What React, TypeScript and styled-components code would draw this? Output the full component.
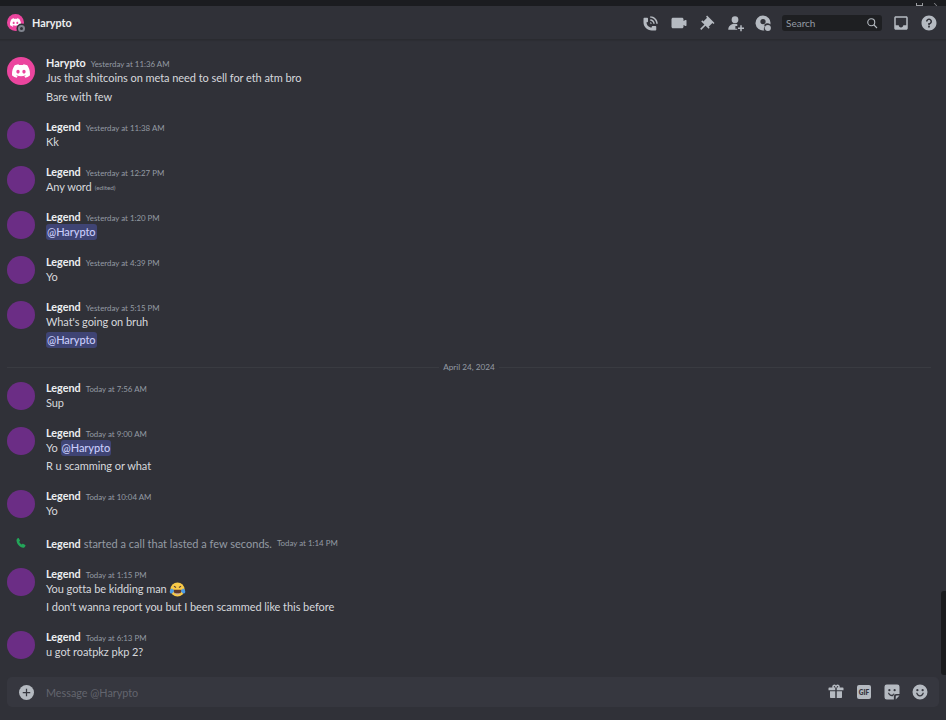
import React from "react";
import styled, { createGlobalStyle } from "styled-components";
import { SiDiscord } from "react-icons/si";

const Global = createGlobalStyle`
  html, body { margin: 0; padding: 0; background: #303138; }
  * { box-sizing: border-box; }
`;

const Page = styled.div`
  position: relative;
  width: 946px;
  height: 720px;
  overflow: hidden;
  display: flex;
  flex-direction: column;
  background: #303138;
  font-family: "Lato", "Noto Sans", sans-serif;
  color: #d6d8dc;
`;
const TitleBar = styled.div`
  height: 6px;
  flex: none;
  background: #1b1c20;
  display: flex;
  justify-content: flex-end;
  align-items: flex-end;
  gap: 12px;
  padding-right: 4px;
`;
const WinGlyph = styled.span<{ $x?: boolean }>`
  width: 7px;
  height: 3px;
  border: 1px solid #9a9ca0;
  border-top: none;
  ${(p) => p.$x && "border: none; border-left: 1px solid #8a8c90; transform: skewX(40deg);"}
`;
const Header = styled.header`
  height: 34px;
  flex: none;
  display: flex;
  align-items: center;
  padding: 0 8px 0 7px;
  border-bottom: 1px solid #2a2b30;
  box-shadow: 0 1px 1px rgba(0, 0, 0, 0.08);
`;
const HeaderAvatar = styled.div`
  position: relative;
  width: 17px;
  height: 17px;
  border-radius: 50%;
  background: #eb459e;
  color: #fff;
  display: flex;
  align-items: center;
  justify-content: center;
  font-size: 11px;
  margin-right: 8px;
`;
const Status = styled.span`
  position: absolute;
  right: -1px;
  bottom: -1px;
  width: 7px;
  height: 7px;
  border-radius: 50%;
  background: #303138;
  border: 2px solid #80848e;
  box-shadow: 0 0 0 1.5px #303138;
`;
const Title = styled.h1`
  margin: 0;
  font-size: 10.8px;
  font-weight: 700;
  color: #eceef0;
  flex: 1;
`;
const Tools = styled.div`
  display: flex;
  align-items: center;
  color: #b5bac1;
`;
const ToolIcon = styled.svg`
  width: 18px;
  height: 18px;
  fill: currentColor;
  margin-right: 10px;
  display: block;
  &:last-child { margin-right: 0; }
`;
const SearchBox = styled.div`
  width: 100px;
  height: 16px;
  margin: 0 10px 0 0;
  border-radius: 3px;
  background: #1e1f22;
  display: flex;
  align-items: center;
  justify-content: space-between;
  padding: 0 4px;
  font-size: 10px;
  color: #949ba4;
`;
const SearchGlass = styled.svg`
  width: 12px;
  height: 12px;
  fill: none;
  stroke: #b5bac1;
  stroke-width: 2.2;
`;
const Feed = styled.main`
  flex: 1;
  padding-top: 14px;
  min-height: 0;
`;
const Group = styled.article`
  display: flex;
  padding-left: 7px;
  margin-bottom: 12px;
`;
const Avatar = styled.div<{ $bg: string }>`
  width: 28px;
  height: 28px;
  flex: none;
  margin-top: 3px;
  border-radius: 50%;
  background: ${(p) => p.$bg};
  color: #fff;
  display: flex;
  align-items: center;
  justify-content: center;
  font-size: 18px;
  margin-right: 11px;
`;
const Body = styled.div`
  min-width: 0;
`;
const Meta = styled.div`
  height: 15px;
  line-height: 14px;
  white-space: nowrap;
`;
const Name = styled.span`
  font-size: 10.8px;
  font-weight: 700;
  color: #eceef0;
`;
const Stamp = styled.time`
  font-size: 7.9px;
  color: #949ba4;
  margin-left: 5px;
`;
const Line = styled.div<{ $gap?: number }>`
  height: 18px;
  line-height: 16px;
  font-size: 11px;
  letter-spacing: -0.06px;
  color: #d6d8dc;
  white-space: nowrap;
  margin-top: ${(p) => p.$gap ?? 0}px;
  display: flex;
  align-items: center;
`;
const Mention = styled.span`
  background: #3f4474;
  color: #c9cdfb;
  border-radius: 3px;
  padding: 0 1px;
  font-weight: 500;
`;
const Edited = styled.span`
  font-size: 6.5px;
  color: #949ba4;
  margin-left: 3px;
  padding-top: 2px;
`;
const JoyIcon = styled.svg`
  width: 17px;
  height: 17px;
  margin-left: 2px;
  flex: none;
`;
const Divider = styled.div`
  display: flex;
  align-items: center;
  height: 12px;
  margin: 8px 15px 6px 7px;
  font-size: 8.2px;
  color: #949ba4;
  &::before,
  &::after {
    content: "";
    height: 1px;
    flex: 1;
    background: #393b41;
  }
`;
const DividerLabel = styled.span`
  padding: 0 4px;
  white-space: nowrap;
`;
const CallRow = styled.div`
  display: flex;
  align-items: center;
  height: 16px;
  margin: 15px 0 14px;
  padding-left: 15px;
  white-space: nowrap;
`;
const CallIcon = styled.svg`
  width: 12px;
  height: 12px;
  fill: #23a559;
  margin-right: 19px;
  flex: none;
`;
const CallText = styled.span`
  font-size: 11px;
  color: #949ba4;
  margin-left: 3px;
`;
const Composer = styled.footer`
  flex: none;
  height: 30px;
  margin: 0 7px 13px;
  padding: 0 10px 0 12px;
  border-radius: 5px;
  background: #36373f;
  display: flex;
  align-items: center;
  color: #b5bac1;
`;
const AddIcon = styled.svg`
  width: 15px;
  height: 15px;
  margin-right: 12px;
  flex: none;
`;
const Placeholder = styled.span`
  flex: 1;
  font-size: 10.8px;
  color: #63656e;
`;
const ComposerIcon = styled.svg`
  width: 18px;
  height: 18px;
  fill: currentColor;
  margin-left: 10px;
  flex: none;
`;
const GifBadge = styled.span`
  width: 14px;
  height: 14px;
  margin: 0 2px 0 12px;
  border-radius: 2px;
  background: #b5bac1;
  color: #36373f;
  font-size: 6.5px;
  font-weight: 800;
  display: flex;
  align-items: center;
  justify-content: center;
  flex: none;
`;
const Scrollbar = styled.div`
  position: absolute;
  right: 0;
  top: 591px;
  width: 5px;
  height: 84px;
  background: #1a1b1e;
  border-radius: 3px 0 0 3px;
`;

const phone = "M11 5V3C16.515 3 21 7.486 21 13H19C19 8.589 15.411 5 11 5ZM17 13H15C15 10.795 13.206 9 11 9V7C14.309 7 17 9.691 17 13ZM11 11V13H13C13 11.896 12.105 11 11 11ZM14 16H18C18.553 16 19 16.447 19 17V21C19 21.553 18.553 22 18 22H13C6.925 22 2 17.075 2 11V6C2 5.447 2.448 5 3 5H7C7.553 5 8 5.447 8 6V10C8 10.553 7.553 11 7 11H6C6.063 14.938 9 18 13 18V17C13 16.447 13.447 16 14 16Z";
const video = "M21.526 8.149C21.231 7.966 20.862 7.951 20.553 8.105L18 9.382V7C18 5.897 17.103 5 16 5H4C2.897 5 2 5.897 2 7V17C2 18.104 2.897 19 4 19H16C17.103 19 18 18.104 18 17V14.618L20.553 15.894C20.694 15.965 20.847 16 21 16C21.183 16 21.365 15.949 21.526 15.851C21.82 15.668 22 15.347 22 15V9C22 8.653 21.82 8.332 21.526 8.149Z";
const pin = "M22 12L12.101 2.10101L10.686 3.51401L12.101 4.92901L7.15096 9.87801V9.88001L5.73596 8.46501L4.32196 9.88001L8.56496 14.122L2.90796 19.778L4.32196 21.192L9.97896 15.536L14.222 19.778L15.636 18.364L14.222 16.95L19.171 12H19.172L20.586 13.414L22 12Z";
const addFriend = "M12 3a4.5 4.5 0 1 1 0 9 4.5 4.5 0 0 1 0-9ZM3 21c0-4.6 3.6-8 8.5-8 1.3 0 2.5.2 3.6.7V16h-2.6v3.6H15V21H3ZM19 15h2v3h3v2h-3v3h-2v-3h-3v-2h3v-3Z";
const inbox = "M19 3H4.99C3.88 3 3.01 3.89 3.01 5L3 19C3 20.1 3.88 21 4.99 21H19C20.1 21 21 20.1 21 19V5C21 3.89 20.1 3 19 3ZM19 15H15C15 16.66 13.65 18 12 18C10.35 18 9 16.66 9 15H4.99V5H19V15Z";
const help = "M12 2C6.486 2 2 6.487 2 12C2 17.515 6.486 22 12 22C17.514 22 22 17.515 22 12C22 6.487 17.514 2 12 2ZM12 18.25C11.31 18.25 10.75 17.691 10.75 17C10.75 16.31 11.31 15.75 12 15.75C12.69 15.75 13.25 16.31 13.25 17C13.25 17.691 12.69 18.25 12 18.25ZM13 13.875V15H11V12H12C13.104 12 14 11.103 14 10C14 8.896 13.104 8 12 8C10.896 8 10 8.896 10 10H8C8 7.795 9.795 6 12 6C14.205 6 16 7.795 16 10C16 11.861 14.723 13.429 13 13.875Z";
const gift = "M4 11h7v9H5a1 1 0 0 1-1-1v-8ZM13 11h7v8a1 1 0 0 1-1 1h-6v-9ZM3 6h4.2A3 3 0 0 1 7 5c0-1.7 1.3-3 2.8-3 1 0 1.7.5 2.2 1.3C12.500 2.500 13.200 2 14.200 2 15.700 2 17 3.300 17 5c0 .4-.1.7-.2 1H21a1 1 0 0 1 1 1v2.500H13V6h-2v3.500H2V7a1 1 0 0 1 1-1ZM9.800 4C9.300 4 9 4.400 9 5s.4 1 1 1h1V5.200C11 4.500 10.500 4 9.800 4ZM14.200 4c-.7 0-1.200.5-1.200 1.200V6h1c.6 0 1-.4 1-1s-.3-1-.8-1Z";
const sticker = "M5 2h14a3 3 0 0 1 3 3v9.500h-4.500a3 3 0 0 0-3 3V22H5a3 3 0 0 1-3-3V5a3 3 0 0 1 3-3Zm3.500 6a1.500 1.500 0 1 0 0 3 1.500 1.500 0 0 0 0-3Zm7 0a1.500 1.500 0 1 0 0 3 1.500 1.500 0 0 0 0-3ZM6.500 13c.8 3 3 4.500 5.500 4.500.6 0 1.200-.1 1.700-.3.2-1 .8-1.900 1.600-2.500l-.9-1.200c-.8 1.300-1.800 2-3 2-1.400 0-2.500-.8-3.300-2.500H6.500ZM17 22l5-5.500h-3.500a1.500 1.500 0 0 0-1.500 1.500v4Z";
const smile = "M12 2a10 10 0 1 1 0 20 10 10 0 0 1 0-20ZM8.500 8a1.500 1.500 0 1 0 0 3 1.500 1.500 0 0 0 0-3Zm7 0a1.500 1.500 0 1 0 0 3 1.500 1.500 0 0 0 0-3ZM6.700 13c.7 3 2.800 5 5.300 5s4.600-2 5.300-5h-1.800c-.6 2.100-1.900 3.300-3.500 3.300S9.100 15.100 8.500 13H6.700Z";
const callGlyph = "M7.500 2.500 10 7c.2.400.1.800-.2 1.100L8.300 9.500c.9 2.200 2.800 4.300 5.200 5.500l1.500-1.400c.3-.3.700-.3 1.100-.1l4.400 2.700c.4.200.6.700.4 1.100-.7 1.900-2.500 4.200-4.500 4.200C10 21.500 3 13.500 3 6.500c0-1.700 2.200-3.700 3.500-4.300.4-.2.800-.1 1 .3Z";

const purple = "#6b2d85";
type Msg = { name: string; time: string; lines: React.ReactNode[]; gaps?: number[]; bot?: boolean };

const Joy = () => (
  <JoyIcon viewBox="0 0 24 24">
    <circle cx="12" cy="12" r="10" fill="#f7c948" />
    <path d="M7 7.500l3 1.800M17 7.500l-3 1.800" stroke="#5d4037" strokeWidth="1.600" fill="none" />
    <path d="M6 12.500h12c0 4-2.500 6.500-6 6.500s-6-2.500-6-6.500Z" fill="#5d3a2e" />
    <path d="M8 16.500c2.500 1.600 5.500 1.600 8 0-.9 1.600-2.300 2.500-4 2.500s-3.100-.9-4-2.500Z" fill="#f8e0d0" />
    <path d="M1 15c0-2 1.200-3.500 3.200-4.500L7 13.500c-.3 2.500-1.800 4-3.500 4C2 17.500 1 16.500 1 15ZM23 15c0-2-1.200-3.500-3.200-4.500L17 13.500c.3 2.500 1.800 4 3.500 4 1.500 0 2.500-1 2.500-2.500Z" fill="#4a9be8" />
  </JoyIcon>
);

const before: Msg[] = [
  { name: "Harypto", time: "Yesterday at 11:36 AM", bot: true, lines: ["Jus that shitcoins on meta need to sell for eth atm bro", "Bare with few"], gaps: [0, 1] },
  { name: "Legend", time: "Yesterday at 11:38 AM", lines: ["Kk"] },
  { name: "Legend", time: "Yesterday at 12:27 PM", lines: [<>Any word<Edited>(edited)</Edited></>] },
  { name: "Legend", time: "Yesterday at 1:20 PM", lines: [<Mention>@Harypto</Mention>] },
  { name: "Legend", time: "Yesterday at 4:39 PM", lines: ["Yo"] },
  { name: "Legend", time: "Yesterday at 5:15 PM", lines: ["What's going on bruh", <Mention>@Harypto</Mention>] },
];
const today: Msg[] = [
  { name: "Legend", time: "Today at 7:56 AM", lines: ["Sup"] },
  { name: "Legend", time: "Today at 9:00 AM", lines: [<>Yo&nbsp;<Mention>@Harypto</Mention></>, "R u scamming or what"] },
  { name: "Legend", time: "Today at 10:04 AM", lines: ["Yo"] },
];
const after: Msg[] = [
  { name: "Legend", time: "Today at 1:15 PM", lines: [<>You gotta be kidding man<Joy /></>, "I don't wanna report you but I been scammed like this before"] },
  { name: "Legend", time: "Today at 6:13 PM", lines: ["u got roatpkz pkp 2?"] },
];

const Message = ({ m }: { m: Msg }) => (
  <Group>
    <Avatar $bg={m.bot ? "#eb459e" : purple}>{m.bot && <SiDiscord />}</Avatar>
    <Body>
      <Meta>
        <Name>{m.name}</Name>
        <Stamp>{m.time}</Stamp>
      </Meta>
      {m.lines.map((l, i) => (
        <Line key={i} $gap={m.gaps?.[i]}>{l}</Line>
      ))}
    </Body>
  </Group>
);

const Tool = ({ d }: { d: string }) => (
  <ToolIcon viewBox="0 0 24 24"><path d={d} /></ToolIcon>
);

export default function App() {
  return (
    <Page>
      <Global />
      <TitleBar>
        <WinGlyph />
        <WinGlyph $x />
      </TitleBar>
      <Header>
        <HeaderAvatar>
          <SiDiscord />
          <Status />
        </HeaderAvatar>
        <Title>Harypto</Title>
        <Tools>
          <Tool d={phone} />
          <Tool d={video} />
          <Tool d={pin} />
          <Tool d={addFriend} />
          <ToolIcon viewBox="0 0 24 24">
            <path d="M12 2a10 10 0 0 1 9.800 12 5.500 5.500 0 0 0-7.800 7.800A10 10 0 1 1 12 2Zm0 4.500a3.500 3.500 0 1 0 0 7 3.500 3.500 0 0 0 0-7ZM5.500 18.500c1.300-2 3.700-3.200 6.500-3.200 1 0 1.900.2 2.700.4a5.500 5.500 0 0 0-1 4C10 20 7 19.800 5.500 18.500Z" />
            <circle cx="18.500" cy="18.500" r="4" />
          </ToolIcon>
          <SearchBox>
            Search
            <SearchGlass viewBox="0 0 24 24"><circle cx="10.500" cy="10.500" r="7" /><path d="M16 16l6 6" /></SearchGlass>
          </SearchBox>
          <Tool d={inbox} />
          <Tool d={help} />
        </Tools>
      </Header>
      <Feed>
        {before.map((m, i) => <Message key={i} m={m} />)}
        <Divider><DividerLabel>April 24, 2024</DividerLabel></Divider>
        {today.map((m, i) => <Message key={i} m={m} />)}
        <CallRow>
          <CallIcon viewBox="0 0 24 24"><path d={callGlyph} /></CallIcon>
          <Name>Legend</Name>
          <CallText>started a call that lasted a few seconds.</CallText>
          <Stamp>Today at 1:14 PM</Stamp>
        </CallRow>
        {after.map((m, i) => <Message key={i} m={m} />)}
      </Feed>
      <Composer>
        <AddIcon viewBox="0 0 24 24">
          <circle cx="12" cy="12" r="12" fill="#b5bac1" />
          <path d="M11 6h2v5h5v2h-5v5h-2v-5H6v-2h5V6Z" fill="#36373f" />
        </AddIcon>
        <Placeholder>Message @Harypto</Placeholder>
        <ComposerIcon viewBox="0 0 24 24"><path d={gift} /></ComposerIcon>
        <GifBadge>GIF</GifBadge>
        <ComposerIcon viewBox="0 0 24 24"><path d={sticker} /></ComposerIcon>
        <ComposerIcon viewBox="0 0 24 24"><path d={smile} /></ComposerIcon>
      </Composer>
      <Scrollbar />
    </Page>
  );
}
